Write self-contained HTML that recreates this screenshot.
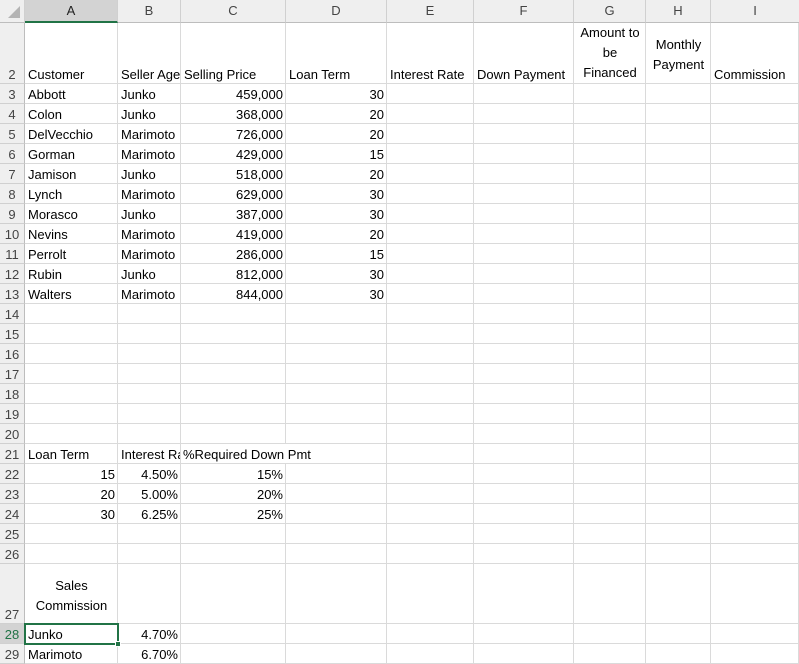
<!DOCTYPE html>
<html><head><meta charset="utf-8"><style>
*{margin:0;padding:0;box-sizing:border-box}
body{width:799px;height:664px;overflow:hidden;background:#fff;font-family:"Liberation Sans",Carlito,sans-serif;font-size:13px;color:#000;position:relative}
table{border-collapse:separate;border-spacing:0;table-layout:fixed;width:799px;position:absolute;left:0;top:0}
td{border-right:1px solid #dadada;border-bottom:1px solid #dadada;white-space:nowrap;vertical-align:bottom;padding:0 2px 0 3px;line-height:16px;overflow:visible}
td.rh{background:#efefef;color:#444;border-right:1px solid #bdbdbd;border-bottom:1px solid #d0d0d0;padding:0;text-align:center}
tr.ch td{background:#efefef;color:#444;text-align:center;vertical-align:middle;border-bottom:1px solid #bdbdbd;border-right:1px solid #d0d0d0;height:23px;padding:0;line-height:18px}
tr.ch td.sel{background:#d3d3d3;border-bottom:2px solid #217346;color:#222}
td.rsel{background:#d3d3d3!important;color:#217346!important}
.r{text-align:right}
.c{text-align:center}
.h{overflow:hidden}
.m{position:relative;top:2px;display:inline-block;line-height:20px}
tr{height:20px}
</style></head><body>
<table>
<colgroup><col style="width:25px"><col style="width:93px"><col style="width:63px"><col style="width:105px"><col style="width:101px"><col style="width:87px"><col style="width:100px"><col style="width:72px"><col style="width:65px"><col style="width:88px"></colgroup>
<tr class="ch"><td style="position:relative"><svg width="14" height="14" style="position:absolute;right:3px;bottom:3px"><polygon points="13,1 13,13 1,13" fill="#b4b4b4"/></svg></td><td class="sel">A</td><td>B</td><td>C</td><td>D</td><td>E</td><td>F</td><td>G</td><td>H</td><td style="border-right:none">I</td></tr>
<tr style="height:61px"><td class="rh">2</td><td>Customer</td><td class="h">Seller Agent</td><td>Selling Price</td><td>Loan Term</td><td>Interest Rate</td><td>Down Payment</td><td class="c"><span class="m" style="top:0">Amount to<br>be<br>Financed</span></td><td class="c" style="vertical-align:middle"><span class="m">Monthly<br>Payment</span></td><td>Commission</td></tr>
<tr><td class="rh">3</td><td>Abbott</td><td>Junko</td><td class="r">459,000</td><td class="r">30</td><td></td><td></td><td></td><td></td><td></td></tr>
<tr><td class="rh">4</td><td>Colon</td><td>Junko</td><td class="r">368,000</td><td class="r">20</td><td></td><td></td><td></td><td></td><td></td></tr>
<tr><td class="rh">5</td><td>DelVecchio</td><td>Marimoto</td><td class="r">726,000</td><td class="r">20</td><td></td><td></td><td></td><td></td><td></td></tr>
<tr><td class="rh">6</td><td>Gorman</td><td>Marimoto</td><td class="r">429,000</td><td class="r">15</td><td></td><td></td><td></td><td></td><td></td></tr>
<tr><td class="rh">7</td><td>Jamison</td><td>Junko</td><td class="r">518,000</td><td class="r">20</td><td></td><td></td><td></td><td></td><td></td></tr>
<tr><td class="rh">8</td><td>Lynch</td><td>Marimoto</td><td class="r">629,000</td><td class="r">30</td><td></td><td></td><td></td><td></td><td></td></tr>
<tr><td class="rh">9</td><td>Morasco</td><td>Junko</td><td class="r">387,000</td><td class="r">30</td><td></td><td></td><td></td><td></td><td></td></tr>
<tr><td class="rh">10</td><td>Nevins</td><td>Marimoto</td><td class="r">419,000</td><td class="r">20</td><td></td><td></td><td></td><td></td><td></td></tr>
<tr><td class="rh">11</td><td>Perrolt</td><td>Marimoto</td><td class="r">286,000</td><td class="r">15</td><td></td><td></td><td></td><td></td><td></td></tr>
<tr><td class="rh">12</td><td>Rubin</td><td>Junko</td><td class="r">812,000</td><td class="r">30</td><td></td><td></td><td></td><td></td><td></td></tr>
<tr><td class="rh">13</td><td>Walters</td><td>Marimoto</td><td class="r">844,000</td><td class="r">30</td><td></td><td></td><td></td><td></td><td></td></tr>
<tr><td class="rh">14</td><td></td><td></td><td></td><td></td><td></td><td></td><td></td><td></td><td></td></tr>
<tr><td class="rh">15</td><td></td><td></td><td></td><td></td><td></td><td></td><td></td><td></td><td></td></tr>
<tr><td class="rh">16</td><td></td><td></td><td></td><td></td><td></td><td></td><td></td><td></td><td></td></tr>
<tr><td class="rh">17</td><td></td><td></td><td></td><td></td><td></td><td></td><td></td><td></td><td></td></tr>
<tr><td class="rh">18</td><td></td><td></td><td></td><td></td><td></td><td></td><td></td><td></td><td></td></tr>
<tr><td class="rh">19</td><td></td><td></td><td></td><td></td><td></td><td></td><td></td><td></td><td></td></tr>
<tr><td class="rh">20</td><td></td><td></td><td></td><td></td><td></td><td></td><td></td><td></td><td></td></tr>
<tr><td class="rh">21</td><td>Loan Term</td><td class="h">Interest Rate</td><td style="padding-left:2px;border-right:none;position:relative;z-index:1">%Required Down Pmt</td><td></td><td></td><td></td><td></td><td></td><td></td></tr>
<tr><td class="rh">22</td><td class="r">15</td><td class="r">4.50%</td><td class="r">15%</td><td></td><td></td><td></td><td></td><td></td><td></td></tr>
<tr><td class="rh">23</td><td class="r">20</td><td class="r">5.00%</td><td class="r">20%</td><td></td><td></td><td></td><td></td><td></td><td></td></tr>
<tr><td class="rh">24</td><td class="r">30</td><td class="r">6.25%</td><td class="r">25%</td><td></td><td></td><td></td><td></td><td></td><td></td></tr>
<tr><td class="rh">25</td><td></td><td></td><td></td><td></td><td></td><td></td><td></td><td></td><td></td></tr>
<tr><td class="rh">26</td><td></td><td></td><td></td><td></td><td></td><td></td><td></td><td></td><td></td></tr>
<tr style="height:60px"><td class="rh">27</td><td class="c" style="vertical-align:middle"><span class="m">Sales<br>Commission</span></td><td></td><td></td><td></td><td></td><td></td><td></td><td></td><td></td></tr>
<tr><td class="rh rsel">28</td><td>Junko</td><td class="r">4.70%</td><td></td><td></td><td></td><td></td><td></td><td></td><td></td></tr>
<tr><td class="rh">29</td><td>Marimoto</td><td class="r">6.70%</td><td></td><td></td><td></td><td></td><td></td><td></td><td></td></tr>
</table>
<div style="position:absolute;left:24px;top:623px;width:95px;height:22px;border:2px solid #217346"></div>
<div style="position:absolute;left:115px;top:641px;width:6px;height:6px;background:#217346;border:1px solid #fff"></div>
</body></html>
